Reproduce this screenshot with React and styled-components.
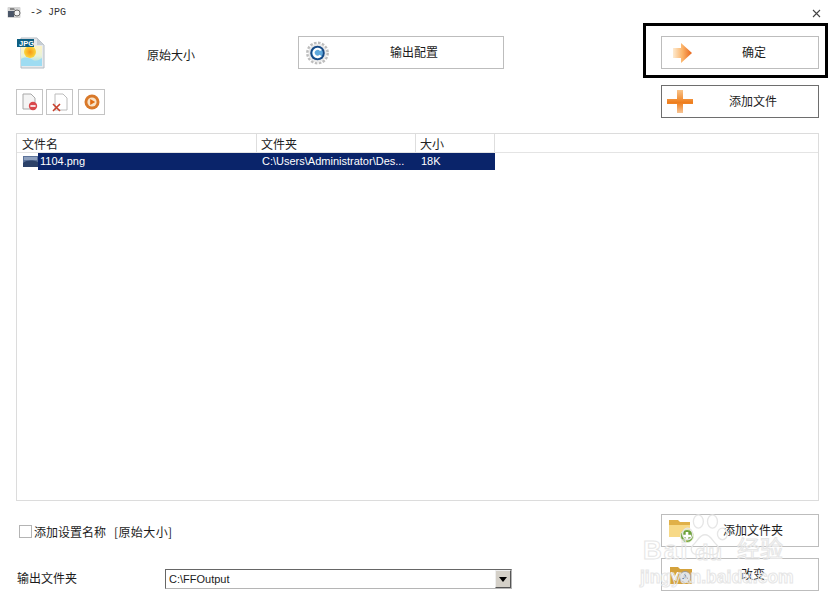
import React from "react";
import styled, { createGlobalStyle } from "styled-components";

const GlobalStyle = createGlobalStyle`
  html, body {
    margin: 0;
    padding: 0;
    background: #fff;
  }
  body {
    font-family: "Noto Sans CJK SC", "Noto Sans", sans-serif;
    font-size: 12px;
    color: #1c1c1c;
  }
`;

const Page = styled.div`
  position: relative;
  width: 833px;
  height: 605px;
  box-sizing: border-box;
  padding: 0 14px 0 16px;
  overflow: hidden;
  background: #fff;
`;

const TitleBar = styled.div`
  display: flex;
  align-items: center;
  height: 24px;
  margin: 0 -2px 0 -9px;
  gap: 9px;
`;

const TitleText = styled.span`
  flex: 1;
  font-family: "Liberation Mono", monospace;
  font-size: 10px;
  color: #333;
`;

const CloseButton = styled.span`
  display: flex;
  margin-top: 2px;
  color: #444;
`;

const TopRow = styled.div`
  display: grid;
  grid-template-columns: 282px 206px 157px 158px;
  height: 32px;
  margin-top: 12px;
  align-items: center;
`;

const Preset = styled.div`
  display: flex;
  align-items: center;
  height: 32px;
`;

const PresetName = styled.span`
  margin-left: 102px;
  margin-top: 4px;
  font-size: 12px;
`;

const ActionButton = styled.button`
  display: grid;
  grid-template-columns: 40px 1fr;
  align-items: center;
  width: ${({ $width }) => ($width ? `${$width}px` : "100%")};
  height: 33px;
  padding: 0 ${({ $trim }) => $trim || 12}px 0 0;
  box-sizing: border-box;
  background: #fff;
  border: 1px solid ${({ $dark }) => ($dark ? "#6e6e6e" : "#bdbdbd")};
  font: inherit;
  color: inherit;
`;

const ButtonIcon = styled.span`
  display: flex;
  justify-content: flex-start;
  padding-left: ${({ $left }) => $left || 6}px;
`;

const ButtonLabel = styled.span`
  padding-bottom: 2px;
  text-align: center;
`;

const Highlighted = styled.div`
  position: relative;
  grid-column: 4;

  &::after {
    content: "";
    position: absolute;
    left: -18px;
    right: -9px;
    top: -13px;
    bottom: -9px;
    border: 3px solid #000;
    pointer-events: none;
  }
`;

const SecondRow = styled.div`
  display: flex;
  justify-content: space-between;
  align-items: flex-start;
  height: 33px;
  margin-top: 17px;
`;

const Tools = styled.div`
  display: flex;
  gap: 3px;
  padding-top: 4px;
`;

const ToolButton = styled.button`
  display: flex;
  align-items: center;
  justify-content: center;
  width: 27px;
  height: 26px;
  padding: 0;
  background: #fff;
  border: 1px solid #c4c4c4;
  margin-left: ${({ $gap }) => $gap || 0}px;
`;

const FileList = styled.div`
  height: 368px;
  margin-top: 15px;
  box-sizing: border-box;
  border: 1px solid #dcdcdc;
`;

const ColumnGrid = styled.div`
  display: grid;
  grid-template-columns: 240px 159px 79px;
  width: 478px;
`;

const HeaderRow = styled.div`
  height: 18px;
  border-bottom: 1px solid #e4e4e4;
`;

const HeaderCell = styled.div`
  box-sizing: border-box;
  height: 18px;
  line-height: 20px;
  padding-left: ${({ $pad }) => $pad || 4}px;
  border-right: 1px solid #dedede;
  font-size: 12px;
  color: #222;
  overflow: hidden;
`;

const FileRow = styled(ColumnGrid)`
  height: 17px;
  background: linear-gradient(to right, #fff 21px, #0a246a 21px);
  color: #fff;
  font-family: "Liberation Sans", sans-serif;
  font-size: 11px;
  line-height: 17px;
`;

const NameCell = styled.div`
  display: flex;
  align-items: center;
  gap: 2px;
  padding-left: 6px;
`;

const PathCell = styled.div`
  padding-left: 5px;
  white-space: nowrap;
`;

const SizeCell = styled.div`
  padding-left: 5px;
`;

const Bottom = styled.div`
  display: flex;
  justify-content: space-between;
  margin-top: 13px;
`;

const BottomLeft = styled.div`
  display: flex;
  flex-direction: column;
  padding-top: 9px;
`;

const NameOption = styled.label`
  display: flex;
  align-items: center;
  height: 17px;
  padding-left: 3px;
  gap: 2px;
`;

const PresetTag = styled.span`
  margin-left: 6px;
  letter-spacing: 0.4px;
`;

const CheckBox = styled.span`
  display: block;
  width: 11px;
  height: 11px;
  border: 1px solid #b4b4b4;
  background: #fff;
`;

const OutputRow = styled.div`
  display: flex;
  align-items: center;
  height: 20px;
  margin-top: 29px;
  padding-left: 1px;
`;

const OutputLabel = styled.span`
  width: 148px;
  margin-bottom: 3px;
`;

const PathSelect = styled.div`
  display: flex;
  justify-content: space-between;
  align-items: center;
  box-sizing: border-box;
  width: 347px;
  height: 20px;
  padding-left: 3px;
  border: 1px solid #b5b5b5;
  border-top-color: #666;
  border-left-color: #666;
  font-family: "Liberation Sans", sans-serif;
  font-size: 11px;
`;

const SelectArrow = styled.span`
  display: flex;
  align-items: center;
  justify-content: center;
  width: 16px;
  height: 18px;
  box-sizing: border-box;
  background: #d4d0c8;
  border: 1px solid;
  border-color: #eee #555 #555 #eee;

  &::before {
    content: "";
    border-left: 4px solid transparent;
    border-right: 4px solid transparent;
    border-top: 5px solid #000;
  }
`;

const BottomRight = styled.div`
  display: flex;
  flex-direction: column;
  gap: 11px;
  width: 158px;
`;

const Watermark = styled.div`
  position: absolute;
  left: 640px;
  top: 512px;
  width: 170px;
  height: 80px;
  pointer-events: none;
`;

const WatermarkLine = styled.div`
  position: absolute;
  left: ${({ $left }) => $left}px;
  top: ${({ $top }) => $top}px;
  font-family: "Liberation Sans", "Noto Sans CJK SC", sans-serif;
  font-size: ${({ $size }) => $size}px;
  font-weight: ${({ $thin }) => ($thin ? 400 : 700)};
  line-height: 1;
  letter-spacing: ${({ $spacing }) => $spacing || 0}px;
  white-space: nowrap;
  color: transparent;
  -webkit-text-stroke: 1px #e6e6e6;
`;

const PawMark = styled.svg`
  position: absolute;
  left: 40px;
  top: 2px;
`;

const PawIcon = () => (
  <PawMark width="50" height="44" viewBox="0 0 60 53" fill="none" stroke="#e6e6e6" strokeWidth="1.6">
    <ellipse cx="22" cy="9" rx="6" ry="8" />
    <ellipse cx="39" cy="9" rx="6" ry="8" />
    <ellipse cx="9" cy="24" rx="6" ry="7" />
    <ellipse cx="51" cy="24" rx="6" ry="7" />
    <path d="M30 25c-7 0-9 8-14 12-5 5-2 12 5 12 4 0 6-2 9-2s5 2 9 2c7 0 10-7 5-12-5-4-7-12-14-12z" />
  </PawMark>
);

const AppIcon = () => (
  <svg width="14" height="13" viewBox="0 0 14 13">
    <rect x="0.5" y="1" width="13" height="11" rx="1" fill="#d4d4d4" />
    <rect x="1" y="5" width="6" height="6" fill="#4a5669" />
    <circle cx="10" cy="7" r="3" fill="#f4f4f4" stroke="#666" />
    <path d="M3 2h4l1 2H3z" fill="#888" />
  </svg>
);

const JpgFileIcon = () => (
  <svg width="29" height="32" viewBox="0 0 29 32">
    <defs>
      <linearGradient id="jpgSky" x1="0" y1="0" x2="0" y2="1">
        <stop offset="0" stopColor="#fff3c0" />
        <stop offset="0.5" stopColor="#e8f2d8" />
        <stop offset="1" stopColor="#8fd6ee" />
      </linearGradient>
      <radialGradient id="jpgSun">
        <stop offset="0" stopColor="#f79a14" />
        <stop offset="1" stopColor="#fbd63e" />
      </radialGradient>
    </defs>
    <path d="M5 1h16l7 7v23H5z" fill="#e6e9ec" stroke="#b4bcc4" />
    <path d="M21 1v7h7z" fill="#c7ced4" />
    <rect x="5" y="9" width="21" height="20" fill="url(#jpgSky)" />
    <circle cx="14" cy="15" r="6" fill="url(#jpgSun)" />
    <path d="M5 29v-7c5-3 9-1 12 1s6 0 9-2v8z" fill="#9edcf2" />
    <rect x="1" y="2" width="17" height="8" fill="#0e5f82" />
    <text x="3" y="9" fontFamily="Liberation Sans" fontWeight="700" fontSize="7.5" fill="#fff">JPG</text>
  </svg>
);

const GearIcon = () => (
  <svg width="23" height="24" viewBox="0 0 24 24">
    <circle cx="12" cy="12" r="10.4" fill="none" stroke="#bdbdbd" strokeWidth="3" strokeDasharray="2.6 1.5" />
    <circle cx="12" cy="12" r="9.6" fill="#e9e9e9" />
    <circle cx="12" cy="12" r="7.6" fill="#174a86" />
    <circle cx="12" cy="12" r="5.6" fill="#5fa8dc" />
    <path d="M16.4 15.4a5.4 5.4 0 1 1 .2-6.6l-2 1.2a3 3 0 1 0-.3 3.9z" fill="#fff" />
  </svg>
);

const ArrowIcon = () => (
  <svg width="21" height="20" viewBox="0 0 21 20">
    <defs>
      <linearGradient id="arrowFill" x1="0" y1="0" x2="1" y2="0">
        <stop offset="0" stopColor="#fdebd2" />
        <stop offset="0.5" stopColor="#fbb368" />
        <stop offset="1" stopColor="#e8641a" />
      </linearGradient>
    </defs>
    <path d="M1 5h8V0l11 10-11 10v-5H1z" fill="url(#arrowFill)" />
  </svg>
);

const PlusIcon = () => (
  <svg width="26" height="25" viewBox="0 0 26 25">
    <defs>
      <linearGradient id="plusFill" x1="0" y1="0" x2="0" y2="1">
        <stop offset="0" stopColor="#f9c48a" />
        <stop offset="0.55" stopColor="#ee7d1c" />
        <stop offset="1" stopColor="#f7c596" />
      </linearGradient>
    </defs>
    <path d="M10 1h6v9h10v5H16v9h-6v-9H0v-5h10z" fill="url(#plusFill)" />
  </svg>
);

const FolderAddIcon = () => (
  <svg width="26" height="24" viewBox="0 0 26 24">
    <path d="M1 1h9l2 2h10v15H1z" fill="#e0b048" />
    <path d="M1 6h21v12H1z" fill="#f7d987" />
    <circle cx="19" cy="17" r="6.5" fill="#6fa33c" stroke="#e4efd4" />
    <path d="M17.7 13h2.6v2.7H23v2.6h-2.7V21h-2.6v-2.7H15v-2.6h2.7z" fill="#fff" />
  </svg>
);

const ChangeIcon = () => (
  <svg width="22" height="18" viewBox="0 0 22 18">
    <path d="M0 1h8l2 2h12v15H0z" fill="#d4a23c" />
    <circle cx="15" cy="11" r="5.5" fill="#dfe5ea" stroke="#9a9a9a" />
    <path d="M15 7l3 6h-6z" fill="#3d5a86" />
    <path d="M2 6l2.500 5L7 6h1.500L5 14H3.500L1 6z" fill="#fff" />
  </svg>
);

const FileMinusIcon = () => (
  <svg width="17" height="18" viewBox="0 0 17 18">
    <path d="M2 1h8l4 4v11H2z" fill="#f4f4f4" stroke="#a8a8a8" />
    <circle cx="12" cy="13" r="4.2" fill="#d9484c" />
    <rect x="9.4" y="12.2" width="5.2" height="1.6" fill="#fff" />
  </svg>
);

const FileCrossIcon = () => (
  <svg width="17" height="19" viewBox="0 0 17 19">
    <path d="M4 1h8l4 4v12H4z" fill="#fff" stroke="#bcbcbc" />
    <path d="M2 11l7 7M9 11l-7 7" stroke="#c8402c" strokeWidth="1.6" />
  </svg>
);

const PlayIcon = () => (
  <svg width="16" height="16" viewBox="0 0 16 16">
    <circle cx="8" cy="8" r="7.5" fill="#d9792a" />
    <circle cx="8" cy="8" r="4.6" fill="#f8e3c8" />
    <path d="M6.200 5l5 3-5 3z" fill="#e26d12" />
  </svg>
);

const ThumbIcon = () => (
  <svg width="15" height="11" viewBox="0 0 15 11">
    <rect width="15" height="11" fill="#5b7299" />
    <path d="M0 7c4-3 9-3 15-1v5H0z" fill="#2c4269" />
    <rect x="1" y="1" width="13" height="3" fill="#8ea0bd" />
  </svg>
);

const CloseIcon = () => (
  <svg width="9" height="9" viewBox="0 0 9 9" stroke="currentColor" strokeWidth="1.1">
    <path d="M1 1l7 7M8 1l-7 7" />
  </svg>
);

const App = () => (
  <>
    <GlobalStyle />
    <Page>
      <TitleBar>
        <AppIcon />
        <TitleText>-&gt; JPG</TitleText>
        <CloseButton>
          <CloseIcon />
        </CloseButton>
      </TitleBar>

      <TopRow>
        <Preset>
          <JpgFileIcon />
          <PresetName>原始大小</PresetName>
        </Preset>
        <ActionButton $width={206} $trim={14}>
          <ButtonIcon $left={7}><GearIcon /></ButtonIcon>
          <ButtonLabel>输出配置</ButtonLabel>
        </ActionButton>
        <Highlighted>
          <ActionButton>
            <ButtonIcon $left={10}><ArrowIcon /></ButtonIcon>
            <ButtonLabel>确定</ButtonLabel>
          </ActionButton>
        </Highlighted>
      </TopRow>

      <SecondRow>
        <Tools>
          <ToolButton><FileMinusIcon /></ToolButton>
          <ToolButton><FileCrossIcon /></ToolButton>
          <ToolButton $gap={2}><PlayIcon /></ToolButton>
        </Tools>
        <ActionButton $dark $width={158} $trim={14}>
          <ButtonIcon $left={5}><PlusIcon /></ButtonIcon>
          <ButtonLabel>添加文件</ButtonLabel>
        </ActionButton>
      </SecondRow>

      <FileList>
        <HeaderRow>
          <ColumnGrid>
            <HeaderCell $pad={5}>文件名</HeaderCell>
            <HeaderCell>文件夹</HeaderCell>
            <HeaderCell>大小</HeaderCell>
          </ColumnGrid>
        </HeaderRow>
        <FileRow>
          <NameCell>
            <ThumbIcon />
            <span>1104.png</span>
          </NameCell>
          <PathCell>C:\Users\Administrator\Des...</PathCell>
          <SizeCell>18K</SizeCell>
        </FileRow>
      </FileList>

      <Bottom>
        <BottomLeft>
          <NameOption>
            <CheckBox />
            添加设置名称
            <PresetTag>[原始大小]</PresetTag>
          </NameOption>
          <OutputRow>
            <OutputLabel>输出文件夹</OutputLabel>
            <PathSelect>
              C:\FFOutput
              <SelectArrow />
            </PathSelect>
          </OutputRow>
        </BottomLeft>
        <BottomRight>
          <ActionButton $trim={14}>
            <ButtonIcon $left={6}><FolderAddIcon /></ButtonIcon>
            <ButtonLabel>添加文件夹</ButtonLabel>
          </ActionButton>
          <ActionButton $trim={14}>
            <ButtonIcon $left={8}><ChangeIcon /></ButtonIcon>
            <ButtonLabel>改变</ButtonLabel>
          </ActionButton>
        </BottomRight>
      </Bottom>

      <Watermark>
        <PawIcon />
        <WatermarkLine $left={3} $top={25} $size={26} $spacing={2}>Bai</WatermarkLine>
        <WatermarkLine $left={55} $top={30} $size={22}>du</WatermarkLine>
        <WatermarkLine $left={97} $top={26} $size={23} $thin>经验</WatermarkLine>
        <WatermarkLine $left={0} $top={57} $size={17.5}>jingyan.baidu.com</WatermarkLine>
      </Watermark>
    </Page>
  </>
);

export default App;
